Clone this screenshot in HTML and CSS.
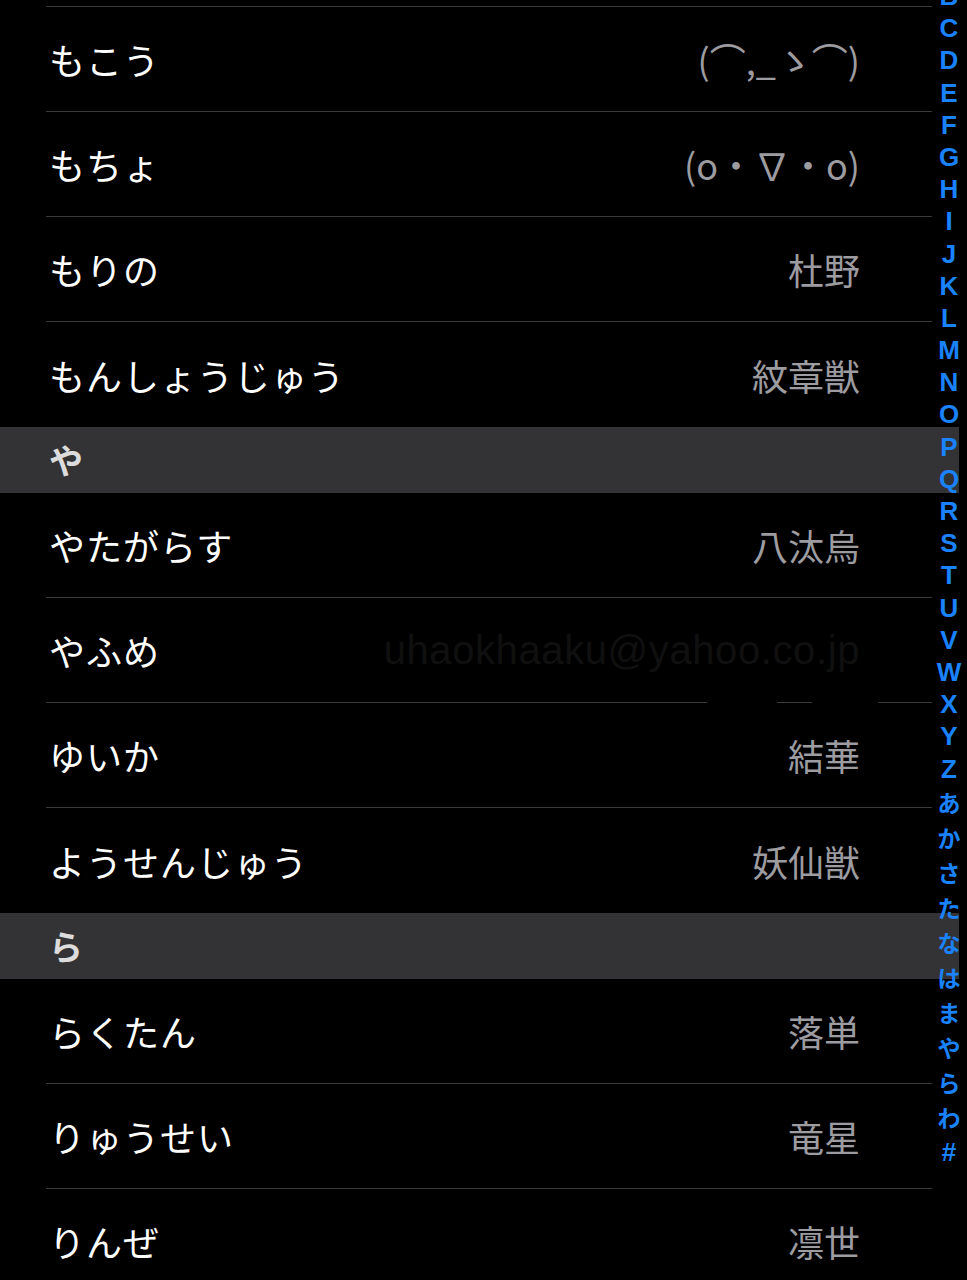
FILE: index.html
```html
<!DOCTYPE html>
<html lang="ja">
<head>
<meta charset="utf-8">
<link rel="stylesheet" href="styles.css">
</head>
<body>
<div class="screen">
  <div class="list">
    <div class="top-sep"></div>
    <div class="row"><span class="name">もこう</span><span class="value">(⌒,_ゝ⌒)</span></div>
    <div class="row"><span class="name">もちょ</span><span class="value">(o・∇・o)</span></div>
    <div class="row"><span class="name">もりの</span><span class="value">杜野</span></div>
    <div class="row last"><span class="name">もんしょうじゅう</span><span class="value">紋章獣</span></div>
    <div class="section">や</div>
    <div class="row"><span class="name">やたがらす</span><span class="value">八汰烏</span></div>
    <div class="row redacted"><span class="name">やふめ</span><span class="value ghost">uhaokhaaku@yahoo.co.jp</span><span class="mask mask-a"></span><span class="mask mask-b"></span></div>
    <div class="row"><span class="name">ゆいか</span><span class="value">結華</span></div>
    <div class="row last"><span class="name">ようせんじゅう</span><span class="value">妖仙獣</span></div>
    <div class="section">ら</div>
    <div class="row"><span class="name">らくたん</span><span class="value">落単</span></div>
    <div class="row"><span class="name">りゅうせい</span><span class="value">竜星</span></div>
    <div class="row"><span class="name">りんぜ</span><span class="value">凛世</span></div>
  </div>
  <div class="index">
    <span class="idx">B</span><span class="idx">C</span><span class="idx">D</span><span class="idx">E</span><span class="idx">F</span><span class="idx">G</span><span class="idx">H</span><span class="idx">I</span><span class="idx">J</span><span class="idx">K</span><span class="idx">L</span><span class="idx">M</span><span class="idx">N</span><span class="idx">O</span><span class="idx">P</span><span class="idx">Q</span><span class="idx">R</span><span class="idx">S</span><span class="idx">T</span><span class="idx">U</span><span class="idx">V</span><span class="idx">W</span><span class="idx">X</span><span class="idx">Y</span><span class="idx">Z</span>
    <span class="idx kana">あ</span><span class="idx kana">か</span><span class="idx kana">さ</span><span class="idx kana">た</span><span class="idx kana">な</span><span class="idx kana">は</span><span class="idx kana">ま</span><span class="idx kana">や</span><span class="idx kana">ら</span><span class="idx kana">わ</span><span class="idx hash">#</span>
  </div>
</div>
</body>
</html>
```

FILE: styles.css
```css
html, body {
  margin: 0;
  padding: 0;
  background: #000;
}
.screen {
  position: relative;
  width: 967px;
  height: 1280px;
  overflow: hidden;
  background: #000;
  font-family: "Noto Sans CJK JP", "Noto Sans", sans-serif;
}
.list {
  display: flex;
  flex-direction: column;
  width: 959px;
}
.top-sep {
  height: 6px;
  margin-left: 46px;
  margin-right: 27px;
  border-bottom: 1px solid #3a3a3c;
}
.row {
  position: relative;
  box-sizing: border-box;
  height: 105px;
  margin-left: 46px;
  margin-right: 27px;
  padding-left: 3px;
  padding-right: 72px;
  display: flex;
  align-items: center;
  justify-content: space-between;
  border-bottom: 1px solid #3a3a3c;
}
.row.last {
  border-bottom: none;
}
.name {
  color: #ffffff;
  font-size: 36px;
  letter-spacing: 1px;
  line-height: 1;
}
.value {
  color: #9c9ca1;
  font-size: 36px;
  line-height: 1;
}
.value.ghost {
  color: #101010;
  font-family: "Liberation Sans", "Noto Sans", sans-serif;
  font-size: 40px;
  letter-spacing: 0.6px;
}
.mask {
  position: absolute;
  background: #000;
  bottom: -1px;
  height: 8px;
}
.mask-a {
  left: 661px;
  width: 70px;
}
.mask-b {
  left: 766px;
  width: 66px;
}
.section {
  box-sizing: border-box;
  height: 66px;
  background: #333335;
  color: #dcdcdc;
  font-weight: 700;
  font-size: 34px;
  line-height: 1;
  padding-left: 49px;
  display: flex;
  align-items: center;
}
.index {
  position: absolute;
  top: -20px;
  right: 0;
  width: 36px;
  display: flex;
  flex-direction: column;
  align-items: center;
}
.idx {
  display: block;
  color: #1a82fb;
  font-family: "Liberation Sans", "Noto Sans", sans-serif;
  font-weight: 700;
  font-size: 26px;
  line-height: 32.2px;
  height: 32.2px;
  text-align: center;
}
.idx.kana {
  font-family: "Noto Sans CJK JP", sans-serif;
  font-size: 23px;
  line-height: 35px;
  height: 35px;
}
.idx.hash {
  font-size: 26px;
  line-height: 35px;
  height: 35px;
}
```
